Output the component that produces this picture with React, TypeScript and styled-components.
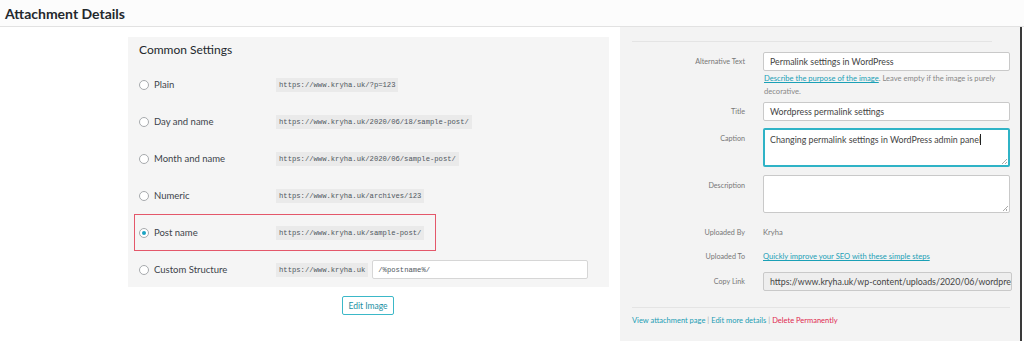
import React from "react";
import styled, { createGlobalStyle } from "styled-components";

const GlobalStyle = createGlobalStyle`
  body {
    margin: 0;
    background: #ffffff;
    font-family: Lato, "Open Sans", sans-serif;
    color: #444;
  }
`;

const permalinkOptions = [
  { label: "Plain", url: "https://www.kryha.uk/?p=123" },
  { label: "Day and name", url: "https://www.kryha.uk/2020/06/18/sample-post/" },
  { label: "Month and name", url: "https://www.kryha.uk/2020/06/sample-post/" },
  { label: "Numeric", url: "https://www.kryha.uk/archives/123" },
  { label: "Post name", url: "https://www.kryha.uk/sample-post/", checked: true },
];

function App() {
  return (
    <>
      <GlobalStyle />
      <Page>
        <Header>
          <Title>Attachment Details</Title>
        </Header>
        <Body>
          <LeftPane>
            <SettingsPanel>
              <PanelTitle>Common Settings</PanelTitle>
              {permalinkOptions.map((opt) => (
                <OptionRow key={opt.label} highlighted={!!opt.checked}>
                  <Radio checked={!!opt.checked} />
                  <OptionLabel>{opt.label}</OptionLabel>
                  <Code>{opt.url}</Code>
                </OptionRow>
              ))}
              <OptionRow>
                <Radio />
                <OptionLabel>Custom Structure</OptionLabel>
                <Code>https://www.kryha.uk</Code>
                <StructureInput>/%postname%/</StructureInput>
              </OptionRow>
              <TagsNote>Available tags:</TagsNote>
            </SettingsPanel>
            <EditButton>Edit Image</EditButton>
          </LeftPane>

          <RightPane>
            <TopRule />
            <FieldRow>
              <FieldLabel>Alternative Text</FieldLabel>
              <FieldBody>
                <TextInput>Permalink settings in WordPress</TextInput>
                <HelpText>
                  <Link>Describe the purpose of the image</Link>. Leave empty if
                  the image is purely decorative.
                </HelpText>
              </FieldBody>
            </FieldRow>
            <FieldRow>
              <FieldLabel>Title</FieldLabel>
              <FieldBody>
                <TextInput>Wordpress permalink settings</TextInput>
              </FieldBody>
            </FieldRow>
            <FieldRow space={8}>
              <FieldLabel top>Caption</FieldLabel>
              <FieldBody>
                <TextArea focused>
                  Changing permalink settings in WordPress admin panel
                  <Caret />
                  <Grip />
                </TextArea>
              </FieldBody>
            </FieldRow>
            <FieldRow space={11}>
              <FieldLabel top>Description</FieldLabel>
              <FieldBody>
                <TextArea>
                  <Grip />
                </TextArea>
              </FieldBody>
            </FieldRow>
            <InfoRow>
              <FieldLabel>Uploaded By</FieldLabel>
              <InfoValue>Kryha</InfoValue>
            </InfoRow>
            <InfoRow>
              <FieldLabel>Uploaded To</FieldLabel>
              <InfoValue>
                <Link>Quickly improve your SEO with these simple steps</Link>
              </InfoValue>
            </InfoRow>
            <FieldRow>
              <FieldLabel>Copy Link</FieldLabel>
              <FieldBody>
                <TextInput readOnly>
                  https://www.kryha.uk/wp-content/uploads/2020/06/wordpress-permalink-settings.jpg
                </TextInput>
              </FieldBody>
            </FieldRow>
            <BottomRule />
            <Actions>
              <ActionLink>View attachment page</ActionLink>
              <Sep>|</Sep>
              <ActionLink>Edit more details</ActionLink>
              <Sep>|</Sep>
              <ActionLink danger>Delete Permanently</ActionLink>
            </Actions>
          </RightPane>
          <Gutter />
        </Body>
      </Page>
    </>
  );
}

export default App;

const Page = styled.div`
  width: 1024px;
  height: 341px;
  overflow: hidden;
  display: flex;
  flex-direction: column;
`;

const Header = styled.div`
  height: 26px;
  background: #fcfcfc;
  border-bottom: 1px solid #e2e2e2;
  display: flex;
  align-items: center;
  padding-left: 5px;
  flex-shrink: 0;
`;

const Title = styled.h1`
  margin: 0;
  font-size: 14px;
  font-weight: 700;
  color: #23282d;
`;

const Body = styled.div`
  flex: 1;
  display: flex;
  min-height: 0;
`;

const LeftPane = styled.div`
  width: 620px;
  flex-shrink: 0;
  background: #ffffff;
  padding: 10px 0 0 128px;
  box-sizing: border-box;
`;

const SettingsPanel = styled.div`
  width: 481px;
  height: 250px;
  background: #f5f5f5;
  overflow: hidden;
  box-sizing: border-box;
  padding: 5px 0 0 6px;
`;

const PanelTitle = styled.div`
  font-size: 12px;
  color: #23282d;
  padding-left: 5px;
  height: 15px;
  line-height: 15px;
  margin-bottom: 9px;
`;

const OptionRow = styled.div<{ highlighted?: boolean }>`
  display: flex;
  align-items: center;
  width: 302px;
  height: 37px;
  box-sizing: border-box;
  border: 1px solid ${(p) => (p.highlighted ? "#e4576a" : "transparent")};
  padding-left: 4px;
  white-space: nowrap;
`;

const Radio = styled.span<{ checked?: boolean }>`
  width: 10px;
  height: 10px;
  border-radius: 50%;
  border: 1px solid #a7aaad;
  background: #fff;
  box-sizing: border-box;
  display: flex;
  align-items: center;
  justify-content: center;
  flex-shrink: 0;

  &::after {
    content: "";
    width: 4px;
    height: 4px;
    border-radius: 50%;
    background: ${(p) => (p.checked ? "#1aa3c2" : "transparent")};
  }
`;

const OptionLabel = styled.span`
  font-size: 9.5px;
  color: #3c434a;
  margin-left: 5px;
  width: 122px;
  flex-shrink: 0;
`;

const Code = styled.code`
  font-family: "Liberation Mono", "DejaVu Sans Mono", monospace;
  font-size: 7.2px;
  color: #50575e;
  background: #eaeaea;
  padding: 2px 3px;
  line-height: 10px;
`;

const StructureInput = styled.div`
  font-family: "Liberation Mono", "DejaVu Sans Mono", monospace;
  font-size: 7.2px;
  color: #50575e;
  background: #fff;
  border: 1px solid #d6d6d6;
  border-radius: 2px;
  width: 216px;
  height: 19px;
  box-sizing: border-box;
  margin-left: 4px;
  padding-left: 5px;
  display: flex;
  align-items: center;
  flex-shrink: 0;
`;

const TagsNote = styled.div`
  font-size: 8px;
  color: #666;
  margin-left: 148px;
  margin-top: -3px;
`;

const EditButton = styled.button`
  display: block;
  margin: 9px 0 0 214px;
  width: 52px;
  height: 19px;
  padding: 0;
  background: #fff;
  border: 1px solid #3bb8c8;
  border-radius: 2px;
  color: #1a8fa3;
  font-family: Lato, "Open Sans", sans-serif;
  font-size: 8.5px;
  white-space: nowrap;
`;

const RightPane = styled.div`
  width: 402px;
  flex-shrink: 0;
  background: #f3f3f3;
  border-right: 2px solid #3a3a3a;
  box-sizing: border-box;
  padding: 14px 10px 0 12px;
`;

const Gutter = styled.div`
  flex: 1;
  background: #fff;
`;

const TopRule = styled.div`
  height: 1px;
  background: #e4e4e4;
  margin-right: 18px;
  margin-bottom: 10px;
`;

const FieldRow = styled.div<{ space?: number }>`
  display: flex;
  align-items: flex-start;
  margin-bottom: ${(p) => p.space ?? 7}px;
`;

const InfoRow = styled.div`
  display: flex;
  align-items: center;
  height: 16px;
  margin-bottom: 8px;
`;

const FieldLabel = styled.div<{ top?: boolean }>`
  width: 113px;
  flex-shrink: 0;
  text-align: right;
  font-size: 7.2px;
  color: #777;
  line-height: 19px;
  padding-top: ${(p) => (p.top ? "1px" : "0")};
`;

const FieldBody = styled.div`
  margin-left: 18px;
  width: 249px;
`;

const InfoValue = styled.div`
  margin-left: 18px;
  font-size: 7.6px;
  color: #777;
  white-space: nowrap;
`;

const TextInput = styled.div<{ readOnly?: boolean }>`
  height: 19px;
  box-sizing: border-box;
  border: 1px solid #c9c9c9;
  border-radius: 2px;
  background: ${(p) => (p.readOnly ? "#eeeeee" : "#fff")};
  font-size: 8.8px;
  color: #444;
  padding: 0 6px;
  line-height: 17px;
  white-space: nowrap;
  overflow: hidden;
`;

const TextArea = styled.div<{ focused?: boolean }>`
  position: relative;
  height: ${(p) => (p.focused ? "39px" : "38px")};
  box-sizing: border-box;
  border: ${(p) => (p.focused ? "2px solid #2fb3c6" : "1px solid #c9c9c9")};
  border-radius: 2px;
  background: #fff;
  font-size: 8.8px;
  color: #444;
  padding: ${(p) => (p.focused ? "3px 5px" : "3px 6px")};
  line-height: 13px;
  white-space: nowrap;
`;

const Caret = styled.span`
  display: inline-block;
  width: 1px;
  height: 11px;
  background: #222;
  vertical-align: -2px;
  margin-left: -1px;
`;

const Grip = styled.span`
  position: absolute;
  right: 1px;
  bottom: 1px;
  width: 5px;
  height: 5px;
  background: linear-gradient(
    135deg,
    transparent 45%,
    #aaa 45%,
    #aaa 55%,
    transparent 55%,
    transparent 70%,
    #aaa 70%,
    #aaa 80%,
    transparent 80%
  );
`;

const HelpText = styled.div`
  font-size: 7.6px;
  color: #888;
  line-height: 13px;
  margin-top: 1px;
  margin-bottom: -3px;
  padding-left: 1px;
  padding-right: 12px;
`;

const Link = styled.span`
  color: #1aa0b6;
  text-decoration: underline;
`;

const BottomRule = styled.div`
  height: 1px;
  background: #e4e4e4;
  margin-top: 16px;
  margin-bottom: 8px;
`;

const Actions = styled.div`
  font-size: 7.5px;
  white-space: nowrap;
  display: flex;
  gap: 2px;
`;

const ActionLink = styled.span<{ danger?: boolean }>`
  color: ${(p) => (p.danger ? "#e0294f" : "#1a9db3")};
`;

const Sep = styled.span`
  color: #aaa;
`;
